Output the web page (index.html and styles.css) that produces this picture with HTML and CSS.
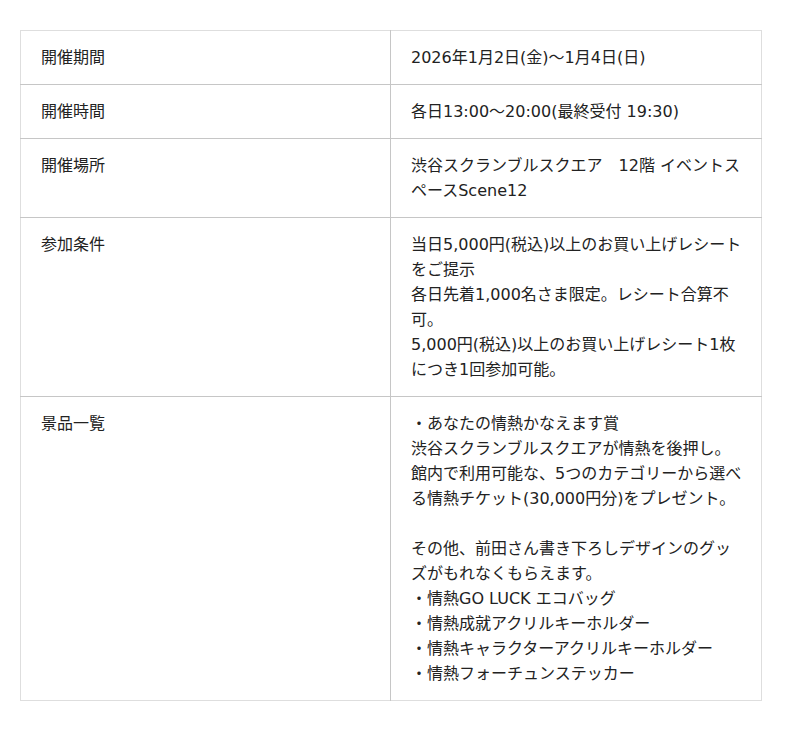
FILE: index.html
```html
<!DOCTYPE html>
<html lang="ja">
<head>
<meta charset="utf-8">
<title>開催概要</title>
<link rel="stylesheet" href="styles.css">
</head>
<body>
<div class="page">
<table class="info">
  <tr><th>開催期間</th><td>2026年1月2日(金)〜1月4日(日)</td></tr>
  <tr><th>開催時間</th><td>各日13:00〜20:00(最終受付 19:30)</td></tr>
  <tr><th>開催場所</th><td>渋谷スクランブルスクエア　12階 イベントスペースScene12</td></tr>
  <tr><th>参加条件</th><td>当日5,000円(税込)以上のお買い上げレシートをご提示<br>各日先着1,000名さま限定。レシート合算不可。<br>5,000円(税込)以上のお買い上げレシート1枚につき1回参加可能。</td></tr>
  <tr><th>景品一覧</th><td>・あなたの情熱かなえます賞<br>渋谷スクランブルスクエアが情熱を後押し。<br>館内で利用可能な、5つのカテゴリーから選べる情熱チケット(30,000円分)をプレゼント。<br><br>その他、前田さん書き下ろしデザインのグッズがもれなくもらえます。<br>・情熱GO LUCK エコバッグ<br>・情熱成就アクリルキーホルダー<br>・情熱キャラクターアクリルキーホルダー<br>・情熱フォーチュンステッカー</td></tr>
</table>
</div>
</body>
</html>
```

FILE: styles.css
```css
html, body {
  margin: 0;
  padding: 0;
  background: #fff;
}
.page {
  padding: 30px 20px;
  font-family: "DejaVu Sans", "Noto Sans CJK JP", sans-serif;
  font-size: 16px;
  line-height: 25px;
  color: #222;
}
.info {
  width: 742px;
  border-collapse: collapse;
  table-layout: fixed;
  border: 1px solid #dedede;
}
.info th,
.info td {
  text-align: left;
  font-weight: normal;
  vertical-align: top;
  padding: 14px 20px 14px 20px;
  border-bottom: 1px solid #c6c6c6;
}
.info td {
  padding-right: 18px;
}
.info th {
  width: 329px;
  border-right: 1px solid #c6c6c6;
}
.info tr:last-child th,
.info tr:last-child td {
  border-bottom: none;
}
```
